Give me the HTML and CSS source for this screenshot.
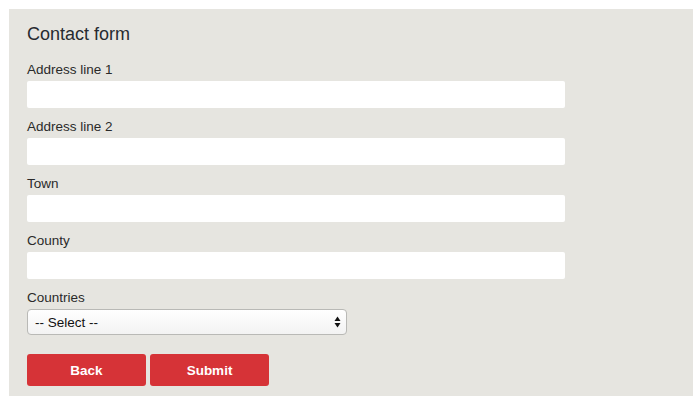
FILE: index.html
```html
<!DOCTYPE html>
<html>
<head>
    <link rel="stylesheet" href="styles.css">
</head>
<body>
    <div class="panel">
        <h2 class="titulo">Contact form</h2>
        <form id="formContato">
            <div class="campo">
                <label for="endereco1">Address line 1</label>
                <input type="text" id="endereco1" name="address1">
            </div>
            <div class="campo">
                <label for="endereco2">Address line 2</label>
                <input type="text" id="endereco2" name="address2">
            </div>
            <div class="campo">
                <label for="cidade">Town</label>
                <input type="text" id="cidade" name="town">
            </div>
            <div class="campo">
                <label for="condado">County</label>
                <input type="text" id="condado" name="county">
            </div>
            <div class="campo">
                <label for="pais">Countries</label>
                <div class="select-wrap">
                    <select id="pais" name="country">
                        <option value="">-- Select --</option>
                    </select>
                    <svg class="setas" width="7" height="12" viewBox="0 0 7 12">
                        <path d="M3.5 0.5 L6.5 5 L0.5 5 Z" fill="#111"/>
                        <path d="M0.5 7 L6.5 7 L3.5 11.5 Z" fill="#111"/>
                    </svg>
                </div>
            </div>
            <div class="botoes">
                <button type="button">Back</button>
                <button type="submit">Submit</button>
            </div>
        </form>
    </div>
</body>
</html>
```

FILE: styles.css
```css
body {
    font-family: "Liberation Sans", Arial, sans-serif;
    background-color: #fff;
    margin: 0;
    padding: 0;
}
.panel {
    width: 684px;
    height: 387px;
    box-sizing: border-box;
    margin: 9px 0 0 9px;
    padding: 14px 18px 0 18px;
    background-color: #e6e5e0;
}
.titulo {
    font-size: 18px;
    line-height: 22px;
    font-weight: normal;
    color: #262b30;
    margin: 0 0 17px 0;
}
.campo {
    margin-bottom: 11px;
}
label {
    display: block;
    font-size: 13.5px;
    line-height: 16px;
    color: #2a2a2a;
    margin-bottom: 3px;
}
input[type="text"] {
    display: block;
    width: 538px;
    height: 27px;
    box-sizing: border-box;
    border: none;
    border-radius: 2px;
    background-color: #fff;
    padding: 0 8px;
    font-family: inherit;
    font-size: 13.5px;
}
.select-wrap {
    position: relative;
    width: 320px;
    height: 26px;
}
select {
    -webkit-appearance: none;
    appearance: none;
    width: 320px;
    height: 26px;
    box-sizing: border-box;
    border: 1px solid #b9b9b6;
    border-radius: 4px;
    background: linear-gradient(#ffffff, #f3f3f3);
    padding: 0 7px;
    font-family: inherit;
    font-size: 13.5px;
    color: #111;
}
.setas {
    position: absolute;
    right: 6px;
    top: 7px;
}
.botoes {
    display: flex;
    gap: 4px;
    margin-top: 19px;
}
button {
    width: 119px;
    height: 32px;
    background-color: #d63337;
    color: white;
    border: none;
    border-radius: 3px;
    font-family: inherit;
    font-size: 13.5px;
    font-weight: bold;
    cursor: pointer;
}
button:hover {
    background-color: #c12a2e;
}
```
